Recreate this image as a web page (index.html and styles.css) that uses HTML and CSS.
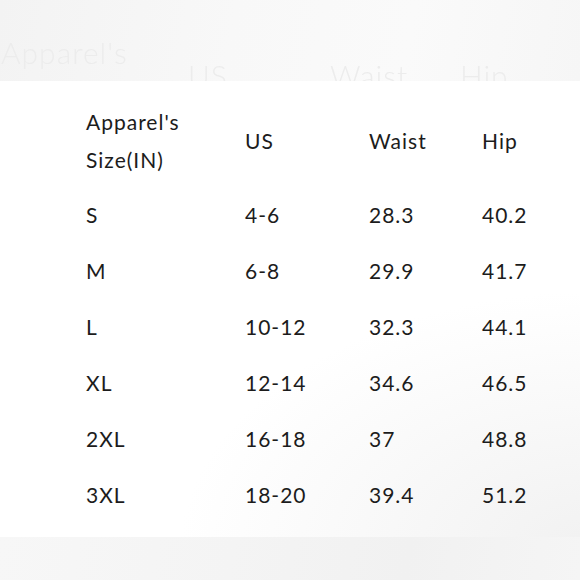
FILE: index.html
```html
<!DOCTYPE html>
<html lang="en">
<head>
<meta charset="utf-8">
<title>Size Chart</title>
<link rel="stylesheet" href="styles.css">
</head>
<body>
<div class="page">
  <div class="ghost">
    <span class="g g1">Apparel's</span>
    <span class="g g2">US</span>
    <span class="g g3">Waist</span>
    <span class="g g4">Hip</span>
  </div>
  <div class="chart">
    <div class="grid">
      <div class="cell head">Apparel's<br>Size(IN)</div>
      <div class="cell head mid">US</div>
      <div class="cell head mid">Waist</div>
      <div class="cell head mid">Hip</div>

      <div class="cell row">S</div><div class="cell row">4-6</div><div class="cell row">28.3</div><div class="cell row">40.2</div>
      <div class="cell row">M</div><div class="cell row">6-8</div><div class="cell row">29.9</div><div class="cell row">41.7</div>
      <div class="cell row">L</div><div class="cell row">10-12</div><div class="cell row">32.3</div><div class="cell row">44.1</div>
      <div class="cell row">XL</div><div class="cell row">12-14</div><div class="cell row">34.6</div><div class="cell row">46.5</div>
      <div class="cell row">2XL</div><div class="cell row">16-18</div><div class="cell row">37</div><div class="cell row">48.8</div>
      <div class="cell row">3XL</div><div class="cell row">18-20</div><div class="cell row">39.4</div><div class="cell row">51.2</div>
    </div>
  </div>
  <div class="foot"></div>
</div>
</body>
</html>
```

FILE: styles.css
```css
html, body {
  margin: 0;
  padding: 0;
  background: #ffffff;
}

.page {
  width: 580px;
  height: 580px;
  display: flex;
  flex-direction: column;
  overflow: hidden;
  font-family: Lato, "Open Sans", sans-serif;
}

.ghost {
  height: 81px;
  flex: none;
  overflow: hidden;
  display: grid;
  grid-template-columns: 188px 142px 130px 1fr;
  background: linear-gradient(100deg, #f3f3f3 0%, #f8f8f8 40%, #fafafa 70%, #f6f6f6 100%);
}

.g {
  font-size: 30px;
  line-height: 30px;
  font-weight: 300;
  color: #ececec;
  letter-spacing: 1px;
  filter: blur(0.7px);
  white-space: nowrap;
}

.g1 { padding-top: 37px; margin-left: 1px; }
.g2, .g3, .g4 { padding-top: 60px; }

.chart {
  flex: 1;
  background: radial-gradient(ellipse 420px 260px at 600px 470px, #f1f1f1 0%, #ffffff 100%);
  padding: 22px 0 0 86px;
}

.grid {
  display: grid;
  grid-template-columns: 159px 124px 113px 1fr;
  color: #1c1c1c;
  font-size: 21px;
  letter-spacing: 1px;
}

.head {
  line-height: 38px;
  margin-bottom: 8px;
}

.mid {
  align-self: center;
}

.row {
  line-height: 56px;
  white-space: nowrap;
}

.foot {
  height: 43px;
  flex: none;
  background: linear-gradient(100deg, #f7f7f7 0%, #f4f4f4 40%, #f1f1f1 70%, #f5f5f5 100%);
}
```
